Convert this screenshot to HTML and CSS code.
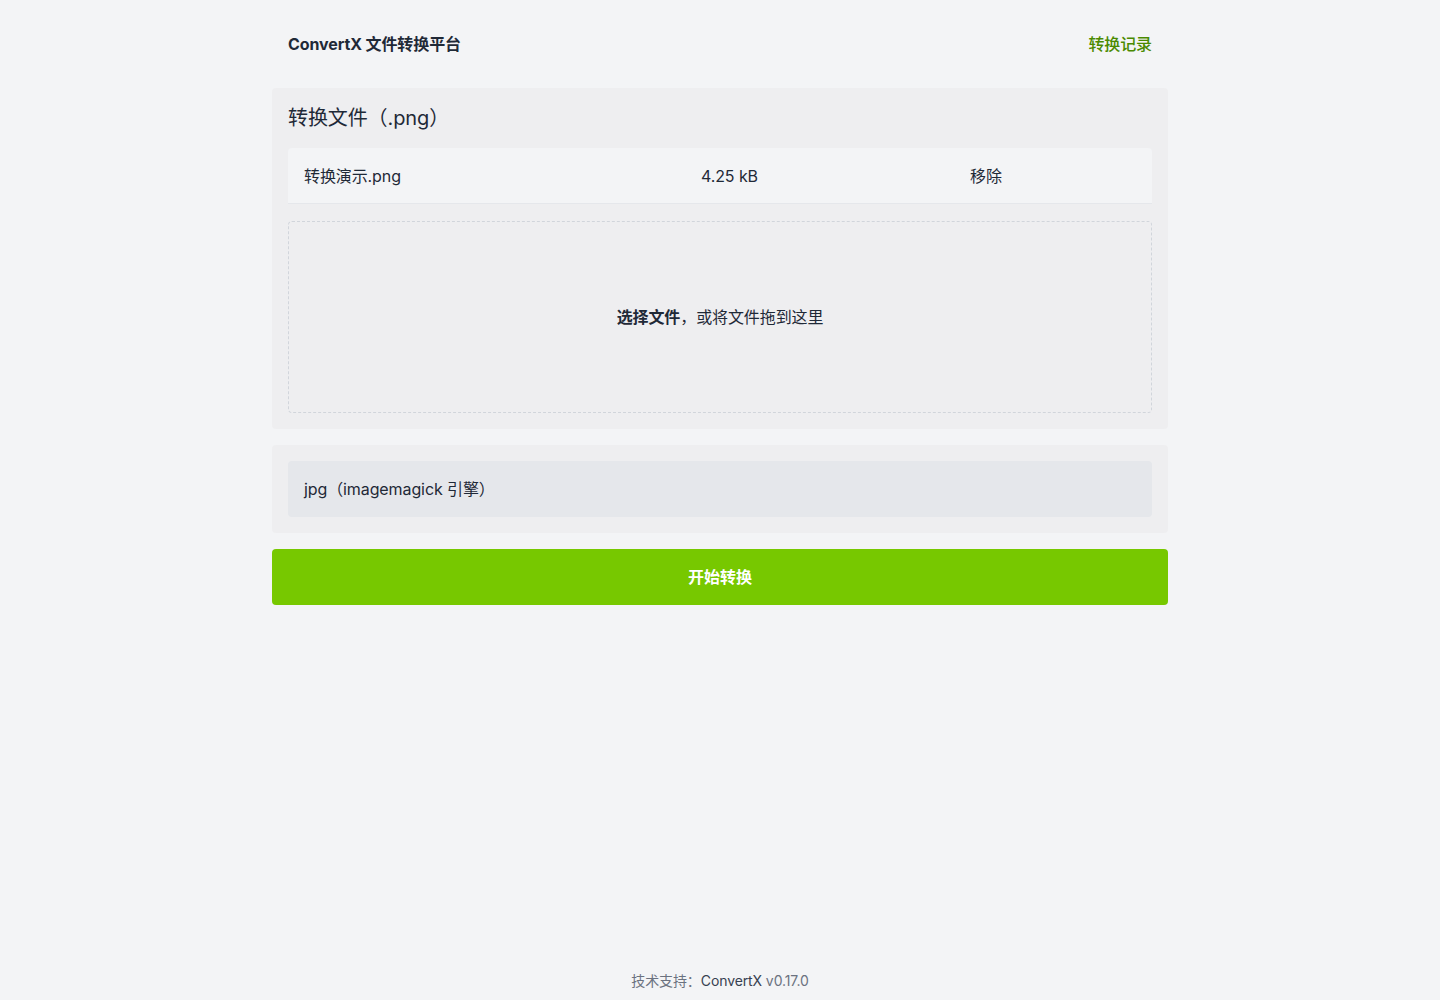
FILE: index.html
```html
<!DOCTYPE html>
<html lang="zh-CN">
<head>
<meta charset="utf-8">
<title>ConvertX 文件转换平台</title>
<link rel="stylesheet" href="styles.css">
</head>
<body>
<div class="page">
  <header class="header">
    <div class="brand">ConvertX 文件转换平台</div>
    <a class="history" href="#">转换记录</a>
  </header>
  <main class="main">
    <section class="card">
      <h1 class="card-title">转换文件（.png）</h1>
      <div class="file-row">
        <div class="cell">转换演示.png</div>
        <div class="cell">4.25 kB</div>
        <div class="cell">移除</div>
      </div>
      <div class="dropzone">
        <span><b>选择文件</b>，或将文件拖到这里</span>
      </div>
    </section>
    <section class="card">
      <div class="select">jpg（imagemagick 引擎）</div>
    </section>
    <button class="convert">开始转换</button>
  </main>
  <footer class="footer">技术支持：<span class="footer-brand">ConvertX</span> v0.17.0</footer>
</div>
</body>
</html>
```
FILE: styles.css
```css
* { box-sizing: border-box; }
html, body { margin: 0; padding: 0; }
body {
  background: #f3f4f6;
  color: #1f2937;
  font-family: Inter, "Noto Sans CJK SC", "Noto Sans", sans-serif;
  font-size: 16px;
  letter-spacing: -0.1px;
}
.page {
  min-height: 1000px;
  display: flex;
  flex-direction: column;
}
.header {
  width: 896px;
  margin: 0 auto;
  height: 88px;
  padding: 0 16px 2px;
  display: flex;
  align-items: center;
  justify-content: space-between;
}
.brand {
  font-weight: 700;
  font-size: 16px;
  color: #1f2937;
}
.history {
  color: #4a8a00;
  text-decoration: none;
  font-weight: 500;
  font-size: 16px;
}
.main {
  width: 896px;
  margin: 0 auto;
  display: flex;
  flex-direction: column;
  gap: 16px;
  flex: 1;
}
.card {
  background: #eeeef0;
  border-radius: 4px;
  padding: 16px;
  display: flex;
  flex-direction: column;
}
.card-title {
  margin: 0;
  font-size: 20px;
  font-weight: 400;
  line-height: 28px;
  color: #1f2937;
  padding-bottom: 16px;
}
.file-row {
  display: grid;
  grid-template-columns: 397px 269px 1fr;
  background: #f3f4f6;
  border-radius: 4px 4px 0 0;
  border-bottom: 1px solid #e5e7eb;
  height: 56px;
  align-items: center;
}
.cell {
  padding: 0 16px;
  line-height: 24px;
}
.dropzone {
  margin-top: 17px;
  height: 192px;
  padding-bottom: 2px;
  border: 1px dashed #d1d5db;
  border-radius: 4px;
  display: flex;
  align-items: center;
  justify-content: center;
  color: #1f2937;
}
.dropzone b { font-weight: 700; }
.select {
  background: #e5e7eb;
  border-radius: 4px;
  height: 56px;
  padding: 0 16px 2px;
  display: flex;
  align-items: center;
}
.convert {
  height: 56px;
  border: none;
  border-radius: 4px;
  background: #77c800;
  color: #ffffff;
  font-family: inherit;
  font-size: 16px;
  font-weight: 700;
  padding: 0 0 2px;
}
.footer {
  text-align: center;
  font-size: 14px;
  color: #6b7280;
  padding-bottom: 9px;
  line-height: 20px;
}
.footer-brand { color: #374151; }
```
